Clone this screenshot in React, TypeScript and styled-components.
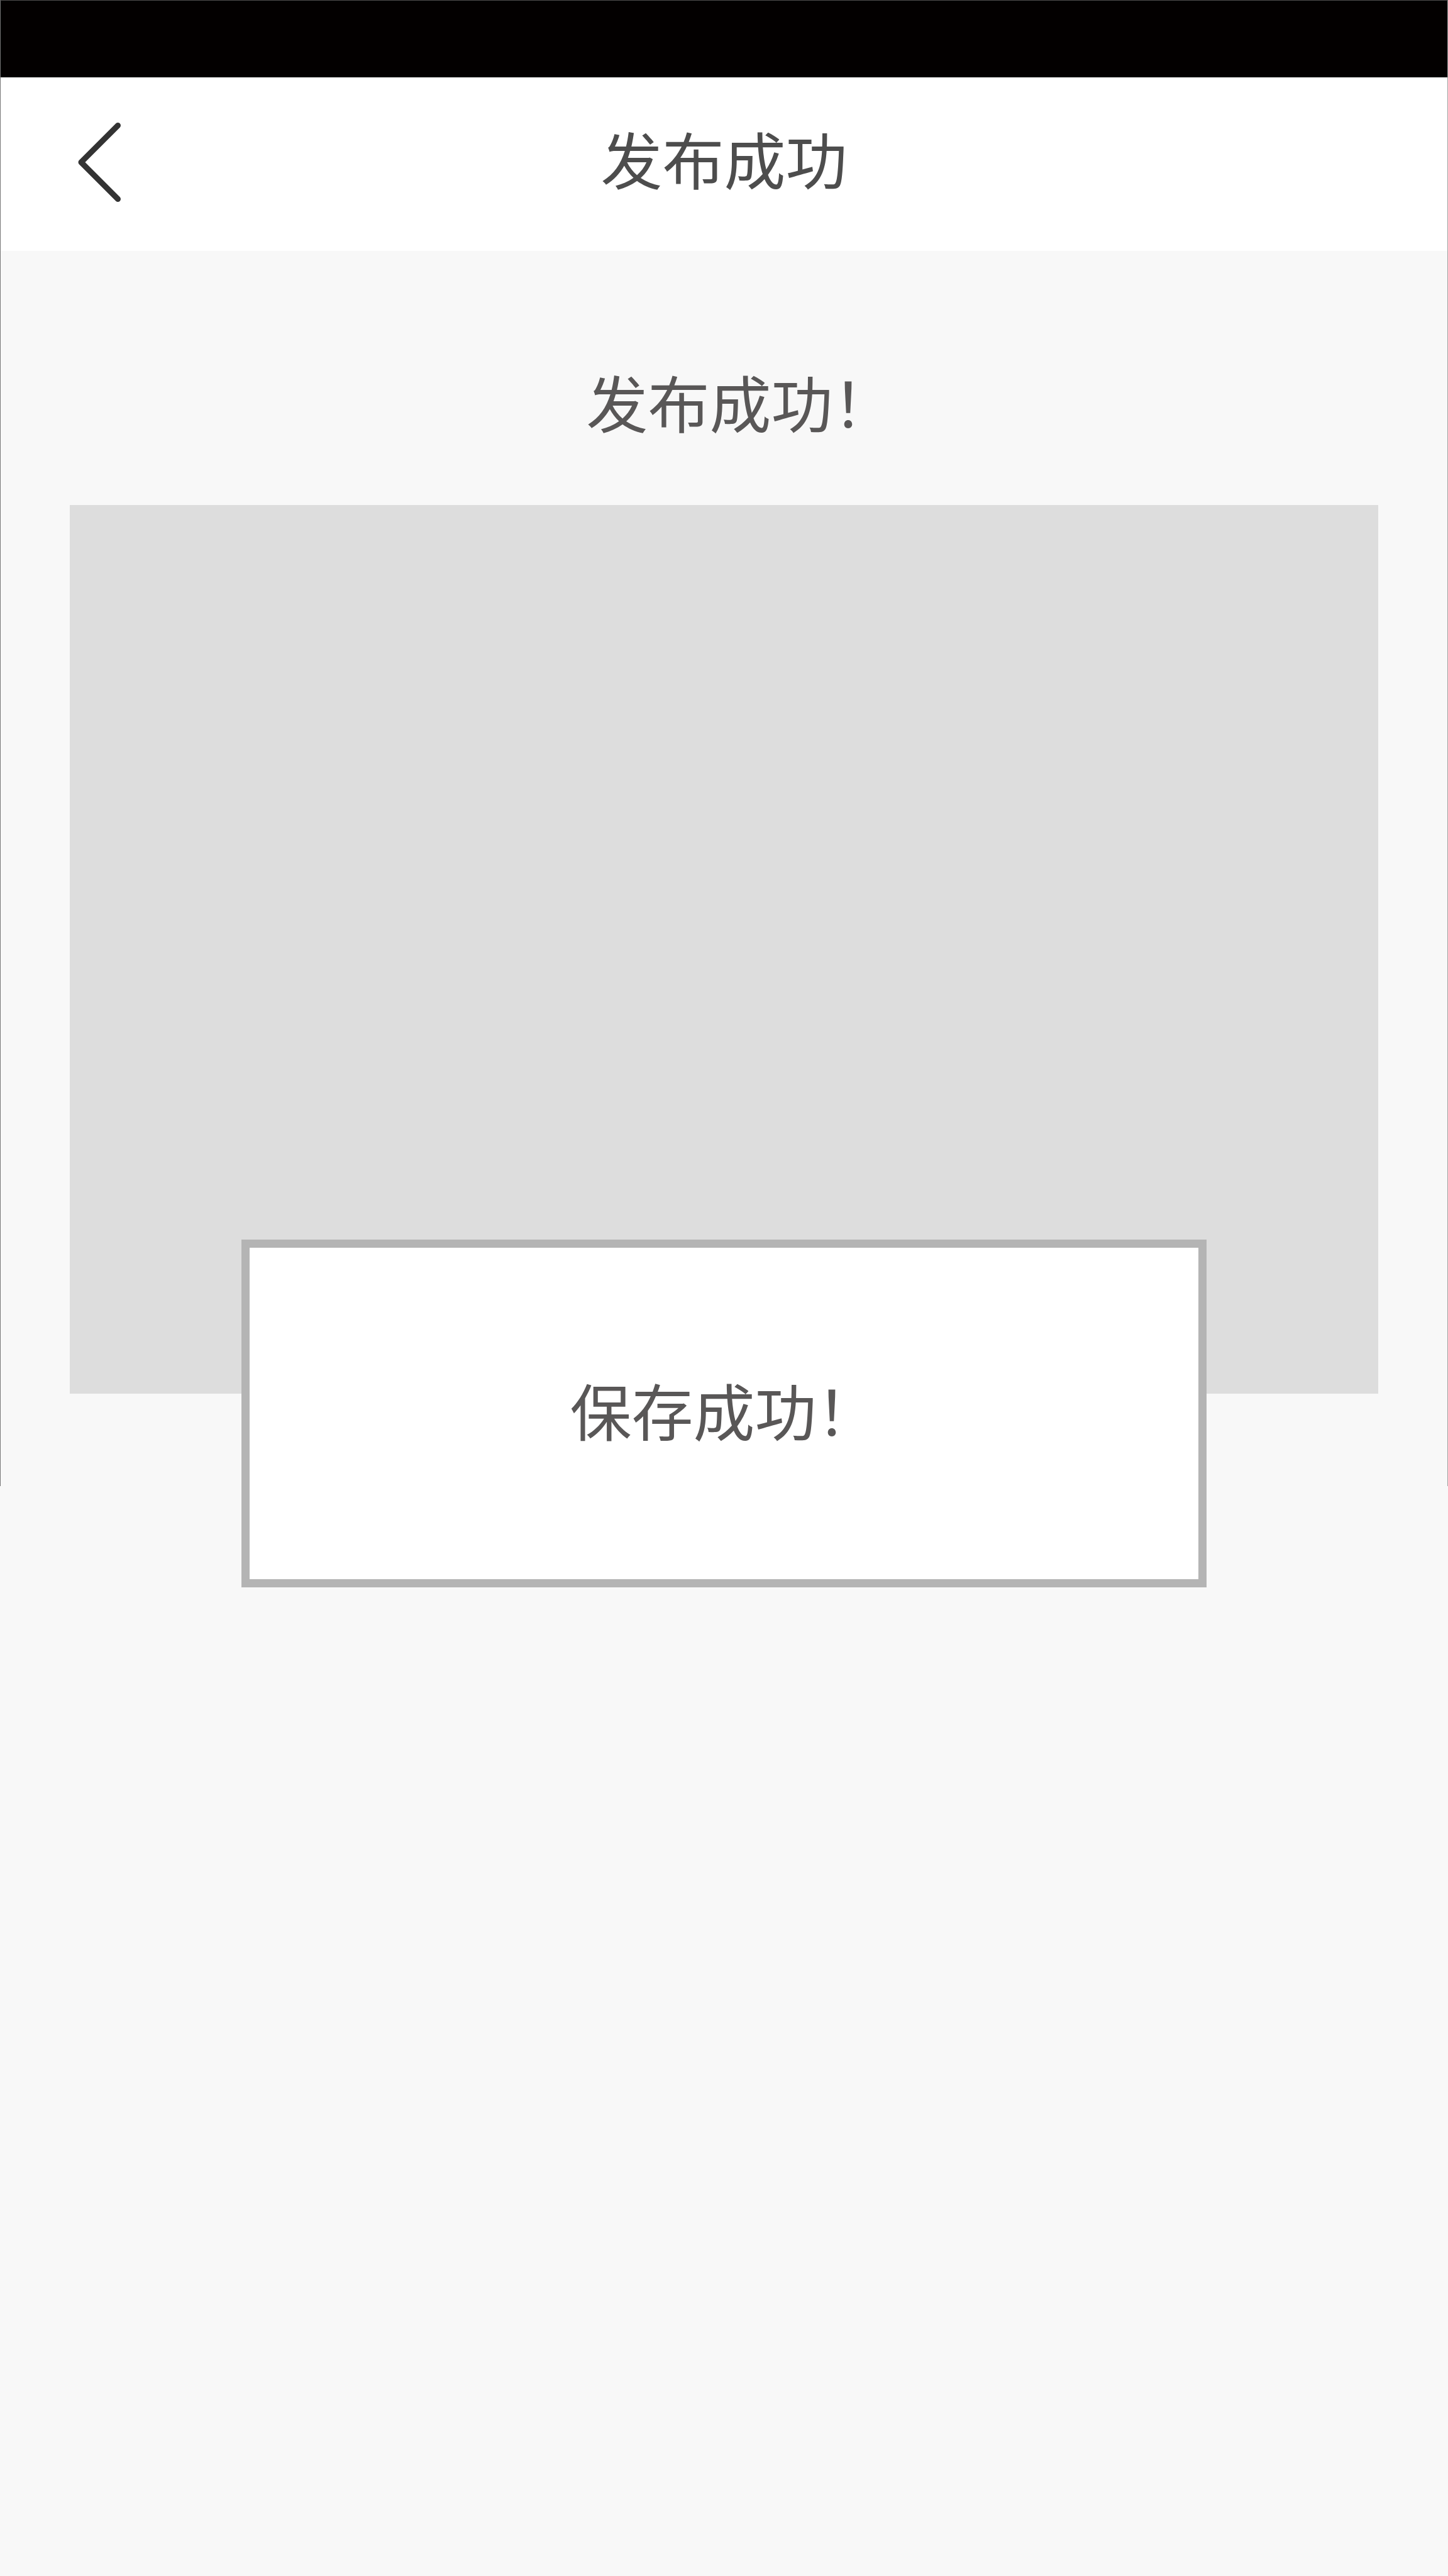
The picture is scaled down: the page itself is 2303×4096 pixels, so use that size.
import React from "react";
import styled, { createGlobalStyle } from "styled-components";

const GlobalStyle = createGlobalStyle`
  *, *::before, *::after { box-sizing: border-box; }
  html, body { margin: 0; background: #f8f8f8; }
  body { font-family: "Noto Sans CJK SC", "Liberation Sans", sans-serif; }
`;

const Page = styled.div`
  position: relative;
  display: flex;
  flex-direction: column;
  min-height: 100vh;
  background: #f8f8f8;
`;

/* Hairline device outline that runs along the upper part of the screen. */
const Outline = styled.div`
  position: absolute;
  inset: 0 0 auto;
  height: 2363px;
  border: solid;
  border-width: 1px 1px 0;
  border-color: #4d4d4d #a0a0a0 #777777 #777777;
  pointer-events: none;
`;

const StatusBar = styled.div`
  height: 123px;
  background: #030000;
`;

const Header = styled.header`
  display: grid;
  grid-template-columns: 208px 1fr 208px;
  align-items: center;
  height: 276px;
  padding: 0 112px 6px;
  background: #ffffff;
`;

const BackButton = styled.button`
  display: flex;
  justify-self: start;
  padding: 12px;
  border: 0;
  background: none;
  color: #333333;
  cursor: pointer;
`;

const Title = styled.h1`
  margin: 0;
  padding-bottom: 16px;
  color: #4d4d4d;
  font-size: 98px;
  font-weight: 400;
  line-height: 148px;
  text-align: center;
`;

const Content = styled.main`
  display: flex;
  flex-direction: column;
  gap: 76px;
  padding: 164px 111px;
`;

/* $indent makes up for the blank half of the closing full-width mark. */
const Message = styled.p<{ $indent?: boolean }>`
  margin: 0;
  padding: 0 0 16px ${(p) => (p.$indent ? "52px" : "0")};
  color: #595757;
  font-size: 98px;
  line-height: 148px;
  text-align: center;
`;

const Preview = styled.div`
  aspect-ratio: 2081 / 1413;
  background: #dddddd;
`;

const Toast = styled.div`
  position: absolute;
  top: 1971px;
  left: 384px;
  right: 384px;
  display: flex;
  align-items: center;
  justify-content: center;
  height: 553px;
  border: 13px solid #b4b4b4;
  background: #ffffff;
`;

function BackIcon() {
  return (
    <svg width="68" height="128" viewBox="0 0 68 128" fill="none" aria-hidden="true">
      <path
        d="M63.5 5.5L5 64L63.5 122.5"
        stroke="currentColor"
        strokeWidth="9"
        strokeLinecap="round"
        strokeLinejoin="round"
      />
    </svg>
  );
}

export default function App() {
  return (
    <>
      <GlobalStyle />
      <Page>
        <StatusBar />
        <Header>
          <BackButton type="button" aria-label="返回">
            <BackIcon />
          </BackButton>
          <Title>发布成功</Title>
        </Header>
        <Content>
          <Message $indent>发布成功！</Message>
          <Preview />
        </Content>
        <Toast role="status">
          <Message>保存成功！</Message>
        </Toast>
        <Outline />
      </Page>
    </>
  );
}
